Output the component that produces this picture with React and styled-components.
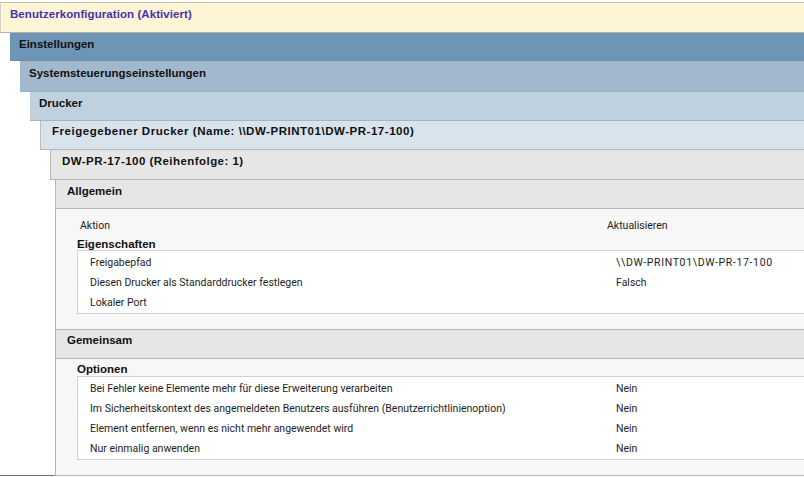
import React from 'react';
import styled, { createGlobalStyle } from 'styled-components';

const GlobalStyle = createGlobalStyle`
  html, body {
    margin: 0;
    padding: 0;
    background: #fff;
  }
  body {
    width: 804px;
    height: 477px;
    overflow: hidden;
    font-family: Roboto, "Liberation Sans", Arial, sans-serif;
    font-size: 10.5px;
    color: #1e1e1e;
  }
`;

const Page = styled.div`
  padding-top: 2px;
  width: 804px;
`;

const Band = styled.div`
  box-sizing: border-box;
  height: ${props => props.$h}px;
  margin-left: ${props => props.$indent}px;
  padding: ${props => props.$top}px 0 0 ${props => props.$pad}px;
  background: ${props => props.$bg};
  border-bottom: 1px solid ${props => props.$line};
  border-top: ${props => (props.$topLine ? `1px solid ${props.$topLine}` : 'none')};
  border-left: ${props => (props.$leftLine ? `1px solid ${props.$leftLine}` : 'none')};
  font-family: "Liberation Sans", Arial, sans-serif;
  font-size: 11.5px;
  font-weight: bold;
  letter-spacing: ${props => props.$spacing || 0}px;
  color: ${props => props.$color || '#111'};
`;

const ContentRow = styled.div`
  display: flex;
  height: 267px;
`;

const Gutter = styled.div`
  box-sizing: border-box;
  width: 55px;
  border-bottom: 1px solid #707070;
`;

const Content = styled.div`
  box-sizing: border-box;
  flex: 1;
  background: #f7f7f7;
  border-left: 1px solid #b4b4b4;
  border-bottom: 1px solid #b8b8b8;
`;

const GroupSection = styled.section`
  box-sizing: border-box;
  height: ${props => props.$h}px;
  padding-left: 21px;
`;

const ColumnHead = styled.div`
  display: flex;
  height: 28px;
  padding: 10px 0 0 3px;
  box-sizing: border-box;
  line-height: 14px;
`;

const ActionHead = styled.span`
  width: 527px;
`;

const GroupTitle = styled.div`
  font-family: "Liberation Sans", Arial, sans-serif;
  font-size: 11.5px;
  font-weight: bold;
  line-height: 14px;
  height: 14px;
  color: #111;
  margin-top: ${props => props.$top || 0}px;
  margin-bottom: ${props => props.$bottom || 0}px;
`;

const GroupBox = styled.div`
  background: #fff;
  border: 1px solid #d2d2d2;
  border-right: none;
  padding: 1px 0;
`;

const Row = styled.div`
  display: flex;
  height: 20px;
  align-items: center;
  padding-left: 12px;
`;

const RowLabel = styled.span`
  width: 526px;
  white-space: nowrap;
`;

const RowValue = styled.span`
  white-space: nowrap;
  letter-spacing: ${props => props.$spacing || 0}px;
`;

const SectionHead = styled.div`
  box-sizing: border-box;
  height: 30px;
  padding: 4px 0 0 11px;
  background: #e6e6e6;
  border-top: 1px solid #b8b8b8;
  border-bottom: 1px solid #b8b8b8;
  font-family: "Liberation Sans", Arial, sans-serif;
  font-size: 11.5px;
  font-weight: bold;
  color: #111;
`;

const levels = [
  { text: 'Benutzerkonfiguration (Aktiviert)', indent: 0, h: 31, bg: '#fef4d6', line: '#b3b3ab', topLine: '#c4c2b6', leftLine: '#d5d2c4', color: '#4a30b0', top: 5, pad: 9, spacing: 0.07 },
  { text: 'Einstellungen', indent: 10, h: 28, bg: '#6f95b6', line: '#6f90aa', top: 5, pad: 9 },
  { text: 'Systemsteuerungseinstellungen', indent: 20, h: 31, bg: '#a2b8cd', line: '#9cb0c2', top: 6, pad: 9 },
  { text: 'Drucker', indent: 30, h: 29, bg: '#bfd1df', line: '#a8b4bd', top: 5, pad: 9 },
  { text: 'Freigegebener Drucker (Name: \\\\DW-PRINT01\\DW-PR-17-100)', indent: 40, h: 29, bg: '#d8e3ec', line: '#b4b8bb', leftLine: '#b8c0c6', top: 4, pad: 11, spacing: 0.53 },
  { text: 'DW-PR-17-100 (Reihenfolge: 1)', indent: 50, h: 30, bg: '#e6e6e6', line: '#b8b8b8', leftLine: '#b8b8b8', top: 5, pad: 11, spacing: 0.45 },
  { text: 'Allgemein', indent: 55, h: 29, bg: '#e6e6e6', line: '#b8b8b8', leftLine: '#b8b8b8', top: 5, pad: 11 },
];

const properties = [
  ['Freigabepfad', '\\\\DW-PRINT01\\DW-PR-17-100', 0.66],
  ['Diesen Drucker als Standarddrucker festlegen', 'Falsch'],
  ['Lokaler Port', ''],
];

const options = [
  ['Bei Fehler keine Elemente mehr für diese Erweiterung verarbeiten', 'Nein'],
  ['Im Sicherheitskontext des angemeldeten Benutzers ausführen (Benutzerrichtlinienoption)', 'Nein'],
  ['Element entfernen, wenn es nicht mehr angewendet wird', 'Nein'],
  ['Nur einmalig anwenden', 'Nein'],
];

const Rows = ({ items }) => (
  <GroupBox>
    {items.map(([label, value, spacing]) => (
      <Row key={label}>
        <RowLabel>{label}</RowLabel>
        <RowValue $spacing={spacing}>{value}</RowValue>
      </Row>
    ))}
  </GroupBox>
);

export default function App() {
  return (
    <Page>
      <GlobalStyle />
      {levels.map(l => (
        <Band
          key={l.text}
          $indent={l.indent}
          $h={l.h}
          $bg={l.bg}
          $line={l.line}
          $topLine={l.topLine}
          $leftLine={l.leftLine}
          $color={l.color}
          $top={l.top}
          $pad={l.pad}
          $spacing={l.spacing}
        >
          {l.text}
        </Band>
      ))}
      <ContentRow>
        <Gutter />
        <Content>
          <GroupSection $h={120}>
            <ColumnHead>
              <ActionHead>Aktion</ActionHead>
              <span>Aktualisieren</span>
            </ColumnHead>
            <GroupTitle $bottom={-1}>Eigenschaften</GroupTitle>
            <Rows items={properties} />
          </GroupSection>
          <SectionHead>Gemeinsam</SectionHead>
          <GroupSection $h={116}>
            <GroupTitle $top={3}>Optionen</GroupTitle>
            <Rows items={options} />
          </GroupSection>
        </Content>
      </ContentRow>
    </Page>
  );
}
